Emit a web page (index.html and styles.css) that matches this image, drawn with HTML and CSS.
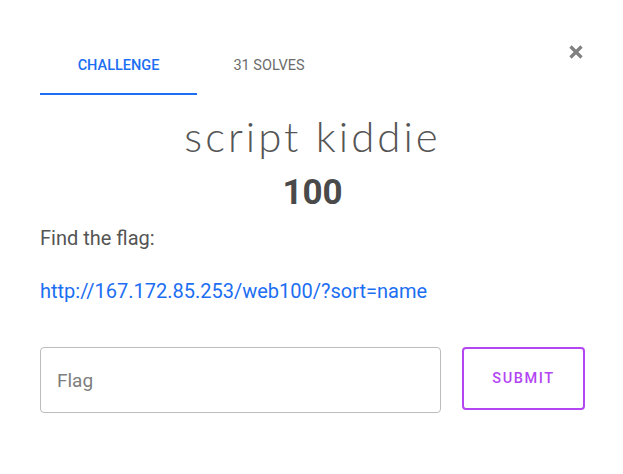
FILE: index.html
```html
<!DOCTYPE html>
<html>
<head>
<meta charset="utf-8">
<link rel="stylesheet" href="styles.css">
</head>
<body>
<div class="modal">
  <button class="close" aria-label="Close">
    <svg width="14" height="14" viewBox="0 0 14 14"><path d="M1.5 1.5 L12.5 12.5 M12.5 1.5 L1.5 12.5" stroke="#808080" stroke-width="3.2" stroke-linecap="butt"/></svg>
  </button>
  <nav class="tabs">
    <a class="tab active">Challenge</a>
    <a class="tab">31 Solves</a>
  </nav>
  <h2 class="title">script kiddie</h2>
  <div class="points">100</div>
  <p class="desc">Find the flag:</p>
  <p class="desc link-row"><a class="link">http://167.172.85.253/web100/?sort=name</a></p>
  <form class="flag-form">
    <input class="flag-input" type="text" placeholder="Flag">
    <button class="submit" type="button">Submit</button>
  </form>
</div>
</body>
</html>
```
FILE: styles.css
```css
html, body {
  margin: 0;
  padding: 0;
  background: #fff;
}
body {
  font-family: Roboto, "Liberation Sans", sans-serif;
  width: 623px;
  height: 474px;
  overflow: hidden;
}
.modal {
  position: relative;
  padding: 38px 38px 0 40px;
}
.close {
  position: absolute;
  top: 45px;
  left: 569px;
  border: 0;
  background: none;
  padding: 0;
  width: 14px;
  height: 14px;
  line-height: 0;
}
.tabs {
  display: flex;
}
.tab {
  display: block;
  padding: 18px 0 17px;
  line-height: 20px;
  font-size: 14.5px;
  font-weight: 500;
  text-transform: uppercase;
  color: #6b6b6b;
  border-bottom: 2px solid transparent;
  width: 157px;
  text-align: center;
  -webkit-font-smoothing: antialiased;
}
.tab + .tab {
  width: 144px;
  font-weight: 400;
}
.tab.active {
  color: #1c6ef2;
  border-bottom-color: #1c6ef2;
}
.title {
  margin: 16px 0 0;
  text-align: center;
  font-family: Lato, sans-serif;
  font-weight: 300;
  font-size: 42px;
  line-height: 50px;
  letter-spacing: 3px;
  color: #555;
}
.points {
  margin-top: 12px;
  text-align: center;
  font-weight: 700;
  font-size: 35px;
  line-height: 40px;
  color: #4a4a4a;
}
.desc {
  margin: 11px 0 0;
  font-size: 20px;
  line-height: 28px;
  color: #555;
}
.link-row {
  margin-top: 25px;
}
.link {
  color: #1c6ef2;
  text-decoration: none;
}
.flag-form {
  display: flex;
  align-items: flex-start;
  gap: 21px;
  margin-top: 42px;
}
.flag-input {
  box-sizing: border-box;
  width: 401px;
  height: 66px;
  border: 1px solid #bdbdbd;
  border-radius: 4px;
  padding: 0 16px;
  font-family: Roboto, sans-serif;
  font-size: 19px;
  color: #444;
  outline: none;
}
.flag-input::placeholder {
  color: #7d7d7d;
}
.submit {
  box-sizing: border-box;
  width: 123px;
  height: 63px;
  border: 2px solid #b445f3;
  border-radius: 4px;
  background: #fff;
  color: #b445f3;
  font-family: Roboto, sans-serif;
  font-size: 14.5px;
  font-weight: 500;
  letter-spacing: 1.6px;
  text-transform: uppercase;
  padding: 0;
}
```
